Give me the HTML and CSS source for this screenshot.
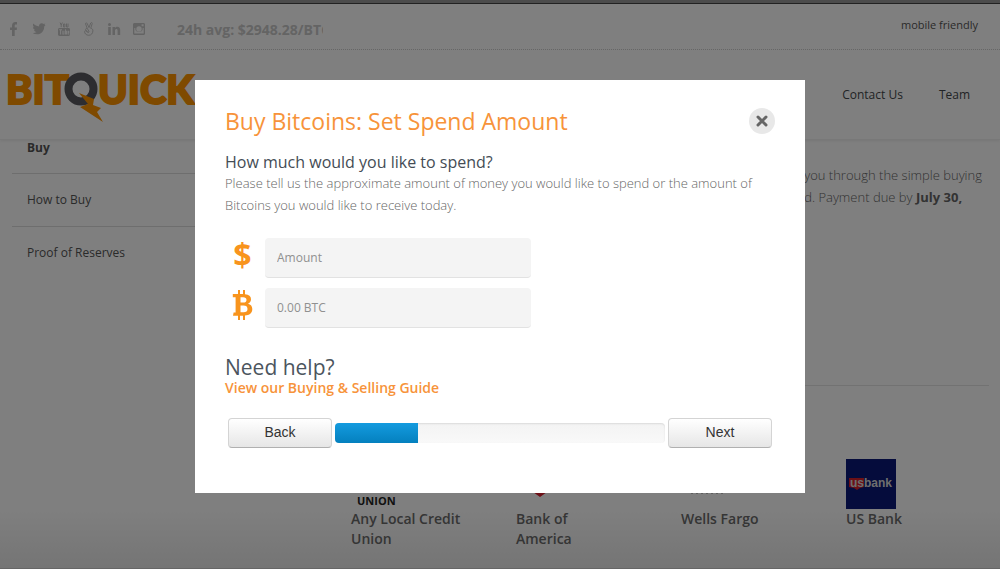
FILE: index.html
```html
<!DOCTYPE html>
<html lang="en">
<head>
    <meta charset="UTF-8">
    <meta name="viewport" content="width=device-width, initial-scale=1.0">
    <title>BitQuick</title>
    <link rel="stylesheet" href="styles.css">
</head>
<body>
    <div class="topbar">
        <ul class="social">
            <li><a href="#" aria-label="Facebook"><svg width="14" height="14" viewBox="0 0 14 14"><path d="M5 14V8H3V5.500h2V4c0-2.500 1.200-4 3.400-4H10v2.500H8.800C8 2.500 7.700 3 7.700 3.800v1.700H10L9.700 8h-2v6z"/></svg></a></li>
            <li><a href="#" aria-label="Twitter"><svg width="14" height="14" viewBox="0 0 14 14"><path d="M13.500 3l-1.300 1.400c.1 4-2.700 7.800-7.200 7.800-1.600 0-3.100-.4-4.400-1.200 1.500.1 2.900-.3 4-1.100-1.300-.1-2.200-.9-2.600-2h1.200C1.800 7.500.9 6.400.9 5l1.300.4C1 4.500.6 2.900 1.400 1.600c1.400 1.700 3.400 2.700 5.700 2.900C6.700 2.700 8 1.200 9.700 1.200c.8 0 1.500.3 2 .9l1.700-.7-1 1.600z"/></svg></a></li>
            <li><a href="#" aria-label="YouTube"><svg width="14" height="14" viewBox="0 0 14 14"><path class="line" d="M3 .5l1.200 2.500L5.400.5M4.200 3v2.200M6.500 2h1.400v3H6.500zM9.500 1.500V5H11V1.500"/><path fill-rule="evenodd" d="M2.500 6h9c1 0 1.500.6 1.500 1.500v4.800c0 1-.6 1.700-1.500 1.700h-9C1.600 14 1 13.300 1 12.300V7.500C1 6.600 1.600 6 2.500 6zM2.200 7.300v1h.9v4.300h1V8.300H5v-1zm3.200 1.500v3.800h2V8.800h-.8v3h-.4v-3zm2.700-1.500v5.300h1.800V8.800H9V7.300zm2.500 1.500v3.800h1.700v-1h-.8v-.7h.8V8.800z"/></svg></a></li>
            <li><a href="#" aria-label="AngelList"><svg width="14" height="14" viewBox="0 0 14 14"><path class="line" d="M5.300 6.500L3.600 2c-.3-1.300 1-1.600 1.500-.6L7 5.600 8.700 1c.5-1 1.900-.5 1.500.7L8.700 6.300c1.500.3 2.300 1 2.200 2.600-.2 2.600-1.700 4.400-4.200 4.400-2.600 0-4.300-2-4.100-3.800.1-1 1.200-1 1.800-.5L6 10.700M5.300 6.500c-1.200-.3-2 .5-1.500 1.500l2 2.300c.9.300 1.500-.4 1-1.200z"/></svg></a></li>
            <li><a href="#" aria-label="LinkedIn"><svg width="14" height="14" viewBox="0 0 14 14"><circle cx="2.500" cy="2.500" r="1.500"/><path d="M1.200 5h2.600v8H1.200zM5.500 5H8v1.100c.5-.8 1.300-1.300 2.400-1.300 2 0 2.800 1.200 2.800 3.400V13h-2.600V8.700c0-1.100-.3-1.700-1.200-1.700S8 7.700 8 8.800V13H5.500z"/></svg></a></li>
            <li><a href="#" aria-label="Instagram"><svg width="14" height="14" viewBox="0 0 14 14"><path fill-rule="evenodd" d="M2.500 1h9c.9 0 1.500.6 1.500 1.500v9c0 .9-.6 1.500-1.500 1.500h-9c-.9 0-1.500-.6-1.500-1.500v-9C1 1.600 1.600 1 2.500 1zM9.600 2.300v2h2v-2zM2.300 6v5.600h9.400V6h-1.100c1 5.300-8.200 5.300-7.200 0zM7 4.300a2.700 2.700 0 1 0 0 5.400 2.700 2.700 0 0 0 0-5.400z"/></svg></a></li>
        </ul>
        <div class="ticker">24h avg: $2948.28/BTC</div>
        <a class="mobile-link" href="#">mobile friendly</a>
    </div>

    <header class="header">
        <a class="logo" href="#" aria-label="BitQuick">
            <svg width="186" height="56" viewBox="0 0 186 56">
                <text x="-2" y="37">BIT</text>
                <circle cx="73" cy="22" r="12.500"/>
                <text x="90" y="37">UICK</text>
                <path d="M71 26L86 32 85 38 93 41 89 45 95 55 72 40 80 37z"/>
            </svg>
        </a>
        <nav class="nav">
            <a href="#">Contact Us</a>
            <a href="#">Team</a>
        </nav>
    </header>

    <div class="content">
        <ul class="sidebar">
            <li><a class="active" href="#">Buy</a></li>
            <li><a href="#">How to Buy</a></li>
            <li><a href="#">Proof of Reserves</a></li>
        </ul>
        <main class="main">
            <div class="intro">
                <p>you through the simple buying<br>d. Payment due by <strong>July 30,</strong></p>
            </div>
            <div class="banks">
                <div class="bank">
                    <svg width="50" height="50" viewBox="0 0 50 50"><text class="union" x="6" y="46">UNION</text></svg>
                    <span>Any Local Credit Union</span>
                </div>
                <div class="bank">
                    <svg width="50" height="50" viewBox="0 0 50 50"><path class="red" d="M10 28h28L24 38z"/></svg>
                    <span>Bank of<br>America</span>
                </div>
                <div class="bank">
                    <svg width="50" height="50" viewBox="0 0 50 50"><path class="dots" d="M10 34h32"/></svg>
                    <span>Wells Fargo</span>
                </div>
                <div class="bank">
                    <svg width="50" height="50" viewBox="0 0 50 50">
                        <path class="navy" d="M0 0h50v50H0z"/>
                        <path class="red" d="M3 19h15v9l-4 1-3 2-3-2-5-1z"/>
                        <text class="usbank" x="4" y="28">usbank</text>
                    </svg>
                    <span>US Bank</span>
                </div>
            </div>
        </main>
    </div>

    <div class="overlay">
        <div class="modal" role="dialog" aria-labelledby="modal-title">
            <div class="modal-head">
                <h2 id="modal-title">Buy Bitcoins: Set Spend Amount</h2>
                <button class="close" type="button" aria-label="Close">
                    <svg width="12" height="12" viewBox="0 0 12 12"><path d="M2 2l8 8M10 2l-8 8"/></svg>
                </button>
            </div>
            <h4>How much would you like to spend?</h4>
            <p>Please tell us the approximate amount of money you would like to spend or the amount of Bitcoins you would like to receive today.</p>

            <form>
                <div class="field">
                    <label for="amount" aria-label="Amount in dollars">$</label>
                    <input type="text" id="amount" placeholder="Amount">
                </div>
                <div class="field">
                    <label for="btc" aria-label="Amount in bitcoins">
                        <svg width="22" height="30" viewBox="0 0 22 30">
                            <path class="coin" fill-rule="evenodd" d="M6 0h2v4h3V0h2v4.300c4 .4 6 2.200 6 5 0 2.300-1.200 3.700-3 4.500 2.800.7 4.300 2.500 4.300 5.300 0 4.200-2.800 6.200-7.300 6.500V30h-2v-4.300H8V30H6v-4.300H1l.6-3.200h2V7.300H.8V4H6zM8.500 7.300v5.200h2.700c2.200 0 3.300-.9 3.300-2.600s-1.100-2.600-3.300-2.600zm0 8.300v6.600h3c2.700 0 4-1.200 4-3.300s-1.300-3.300-4-3.300z"/>
                        </svg>
                    </label>
                    <input type="text" id="btc" placeholder="0.00 BTC">
                </div>

                <h3>Need help?</h3>
                <a class="guide" href="#">View our Buying &amp; Selling Guide</a>

                <div class="steps">
                    <button class="btn" type="button">Back</button>
                    <div class="progress"><div class="bar" style="width: 25%"></div></div>
                    <button class="btn" type="button">Next</button>
                </div>
            </form>
        </div>
    </div>
</body>
</html>
```
FILE: styles.css
```css
* {
    box-sizing: border-box;
}

body {
    display: flex;
    flex-direction: column;
    min-height: 100vh;
    margin: 0;
    border-top: 3px solid #999;
    border-bottom: 1px solid #ccc;
    background: #fff linear-gradient(#fff, #eaeaea) bottom / 100% 60px no-repeat;
    font-family: "Open Sans", "Noto Sans", sans-serif;
    font-size: 13px;
    color: #666;
}

a {
    color: inherit;
    text-decoration: none;
}

ul, h2, h3, h4, p {
    margin: 0;
    padding: 0;
}

ul {
    list-style: none;
}

/* top bar */
.topbar {
    display: flex;
    align-items: center;
    height: 47px;
    padding: 5px 22px 0 7px;
    border-top: 1px solid #444;
    border-bottom: 1px dotted #d0d0d0;
}

.social {
    display: flex;
    gap: 11px;
}

.social svg {
    display: block;
    fill: #c8c8c8;
}

.social .line {
    fill: none;
    stroke: #c8c8c8;
}

.ticker {
    width: 146px;
    margin-left: 31px;
    overflow: hidden;
    white-space: nowrap;
    font-size: 14px;
    font-weight: 700;
    color: #c8c8c8;
}

.mobile-link {
    margin: 0 0 10px auto;
    font-size: 11px;
    color: #555;
}

/* header */
.header {
    display: flex;
    align-items: center;
    justify-content: space-between;
    height: 90px;
    padding: 0 30px 0 8px;
    border-bottom: 1px solid #f0f0f0;
    box-shadow: 0 1px 3px rgba(0, 0, 0, 0.08);
}

.logo svg {
    display: block;
    overflow: visible;
    fill: #ff9400;
}

.logo text {
    font-family: Lato, sans-serif;
    font-size: 40px;
    font-weight: 900;
    stroke: #ff9400;
    stroke-width: 2;
}

.logo circle {
    fill: none;
    stroke: #5a5a60;
    stroke-width: 8;
}

.nav {
    display: flex;
    gap: 36px;
    font-size: 12px;
    color: #44484c;
}

/* content */
.content {
    display: flex;
    flex: 1;
    padding: 0 11px 0 12px;
}

.sidebar {
    flex: 0 0 300px;
    margin-right: 39px;
    font-size: 12px;
    color: #555;
}

.sidebar li {
    padding: 17px 15px;
    line-height: 18px;
    border-bottom: 1px solid #ddd;
}

.sidebar li:first-child {
    padding-top: 0;
    line-height: 16px;
}

.sidebar li:last-child {
    border-bottom: 0;
}

.sidebar .active {
    font-weight: 700;
}

.main {
    flex: 1;
}

.intro {
    display: flex;
    justify-content: flex-end;
    height: 246px;
    padding: 24px 7px 0 0;
    border-bottom: 1px solid #e4e4e4;
    font-weight: 300;
    line-height: 22px;
}

.intro strong {
    font-weight: 700;
}

.banks {
    display: grid;
    grid-template-columns: repeat(4, 1fr);
    gap: 40px;
    padding: 73px 18px 0 0;
}

.bank {
    font-size: 14px;
    font-weight: 600;
    line-height: 20px;
    color: #6a6a6a;
}

.bank svg {
    display: block;
}

.bank span {
    display: block;
}

.union {
    font: 700 11px "Open Sans", sans-serif;
    fill: #222;
}

.usbank {
    font: 700 12px "Liberation Sans", sans-serif;
    fill: #ddd;
}

.red {
    fill: #d8202c;
}

.navy {
    fill: #0a1878;
}

.dots {
    stroke: #777;
    stroke-dasharray: 2 3;
}

/* modal */
.overlay {
    position: fixed;
    inset: 0;
    padding: 80px 20px;
    background: rgba(0, 0, 0, 0.5);
}

.modal {
    max-width: 610px;
    margin: 0 auto;
    padding: 24px 30px 45px;
    background: #fff;
}

.modal-head {
    display: flex;
    align-items: center;
    justify-content: space-between;
}

.modal h2 {
    font-size: 23px;
    font-weight: 400;
    line-height: 34px;
    color: #f7933a;
}

.close {
    display: flex;
    align-items: center;
    justify-content: center;
    width: 26px;
    height: 26px;
    padding: 0;
    border: 0;
    border-radius: 50%;
    background: #e8e8e8;
}

.close path {
    stroke: #666;
    stroke-width: 3;
    stroke-linecap: round;
}

.modal h4 {
    margin-top: 14px;
    font-size: 16px;
    font-weight: 400;
    line-height: 20px;
    color: #444c55;
}

.modal p {
    margin-bottom: 22px;
    font-weight: 300;
    line-height: 22px;
}

.field {
    display: flex;
    margin-bottom: 10px;
}

.field label {
    display: flex;
    justify-content: center;
    width: 35px;
    margin-right: 5px;
    font-size: 32px;
    font-weight: 700;
    line-height: 34px;
    color: #f8941d;
}

.field svg {
    margin-top: 2px;
}

.coin {
    fill: #f8941d;
}

.field input {
    width: 266px;
    height: 40px;
    padding: 0 12px;
    border: 0;
    border-bottom: 1px solid #e2e2e2;
    border-radius: 4px;
    background: #f4f4f4;
    font: 12px "Open Sans", sans-serif;
}

.field input::placeholder {
    color: #909090;
}

.modal h3 {
    margin-top: 26px;
    font-size: 21px;
    font-weight: 400;
    line-height: 26px;
    color: #4c555e;
}

.guide {
    display: block;
    font-size: 14px;
    font-weight: 600;
    line-height: 16px;
    color: #f7933a;
}

.steps {
    display: flex;
    align-items: center;
    gap: 3px;
    margin: 22px 3px 0;
}

.btn {
    width: 104px;
    height: 30px;
    padding: 0 6px 2px;
    border: 1px solid #d4d4d4;
    border-bottom-color: #b0b0b0;
    border-radius: 4px;
    background: linear-gradient(#fff, #e6e6e6);
    font: 14px "Liberation Sans", Arial, sans-serif;
    color: #333;
}

.progress {
    flex: 1;
    height: 20px;
    overflow: hidden;
    border-radius: 4px;
    background: linear-gradient(#f3f3f3, #f9f9f9);
    box-shadow: inset 0 1px 2px rgba(0, 0, 0, 0.1);
}

.bar {
    height: 100%;
    background: linear-gradient(#149bdf, #0480be);
}
```
